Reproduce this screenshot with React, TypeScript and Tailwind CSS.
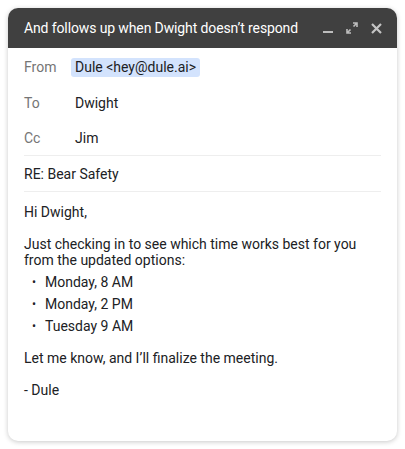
import React from "react";

export default function App() {
  return (
    <div className="w-[405px] h-[449px] bg-white pt-2 px-2" style={{ fontFamily: "Roboto, 'Liberation Sans', sans-serif" }}>
      <div className="w-[389px] h-[433px] rounded-[10px] bg-white shadow-[0_1px_5px_rgba(0,0,0,0.22)] flex flex-col overflow-hidden">
        <div className="h-10 bg-[#404040] flex items-center pl-4 pr-[15px] shrink-0">
          <div className="text-white text-[14px] tracking-[-0.12px] flex-1 min-w-0 leading-none whitespace-nowrap">And follows up when Dwight doesn’t respond</div>
          <div className="flex items-center gap-[13px] shrink-0">
            <svg width="10" height="12" viewBox="0 0 10 12">
              <rect x="0" y="9" width="10" height="2" fill="#bdbdbd" />
            </svg>
            <svg width="12" height="12" viewBox="0 0 12 12">
              <path d="M7 1h4v4M11 1L7.5 4.5M5 11H1V7M1 11l3.5-3.5" stroke="#bdbdbd" strokeWidth="1.6" fill="none" />
            </svg>
            <svg width="11" height="11" viewBox="0 0 11 11">
              <path d="M1 1L10 10M10 1L1 10" stroke="#c4c4c4" strokeWidth="2.2" fill="none" />
            </svg>
          </div>
        </div>
        <div className="px-4 pt-px text-[14px] text-[#202124]">
          <div className="h-9 flex items-center">
            <span className="w-[47px] text-[#757575]">From</span>
            <span className="bg-[#d3e3fd] rounded-[3px] px-1 h-[19px] flex items-center">Dule &lt;hey@dule.ai&gt;</span>
          </div>
          <div className="h-9 flex items-center">
            <span className="w-[51px] text-[#757575]">To</span>
            <span>Dwight</span>
          </div>
          <div className="h-[35px] flex items-center border-b border-[#eeeeee]">
            <span className="w-[51px] text-[#757575]">Cc</span>
            <span>Jim</span>
          </div>
          <div className="h-9 flex items-center border-b border-[#eeeeee] pt-[2px]">RE: Bear Safety</div>
          <div className="pt-[12px] leading-4">
            <p>Hi Dwight,</p>
            <p className="mt-4">Just checking in to see which time works best for you from the updated options:</p>
            <ul className="mt-[3px]">
              <li className="h-[22px] flex items-center"><span className="w-[21px] pl-[8px] text-[12px]">•</span>Monday, 8 AM</li>
              <li className="h-[22px] flex items-center"><span className="w-[21px] pl-[8px] text-[12px]">•</span>Monday, 2 PM</li>
              <li className="h-[22px] flex items-center"><span className="w-[21px] pl-[8px] text-[12px]">•</span>Tuesday 9 AM</li>
            </ul>
            <p className="mt-[13px]">Let me know, and I’ll finalize the meeting.</p>
            <p className="mt-4">- Dule</p>
          </div>
        </div>
      </div>
    </div>
  );
}
